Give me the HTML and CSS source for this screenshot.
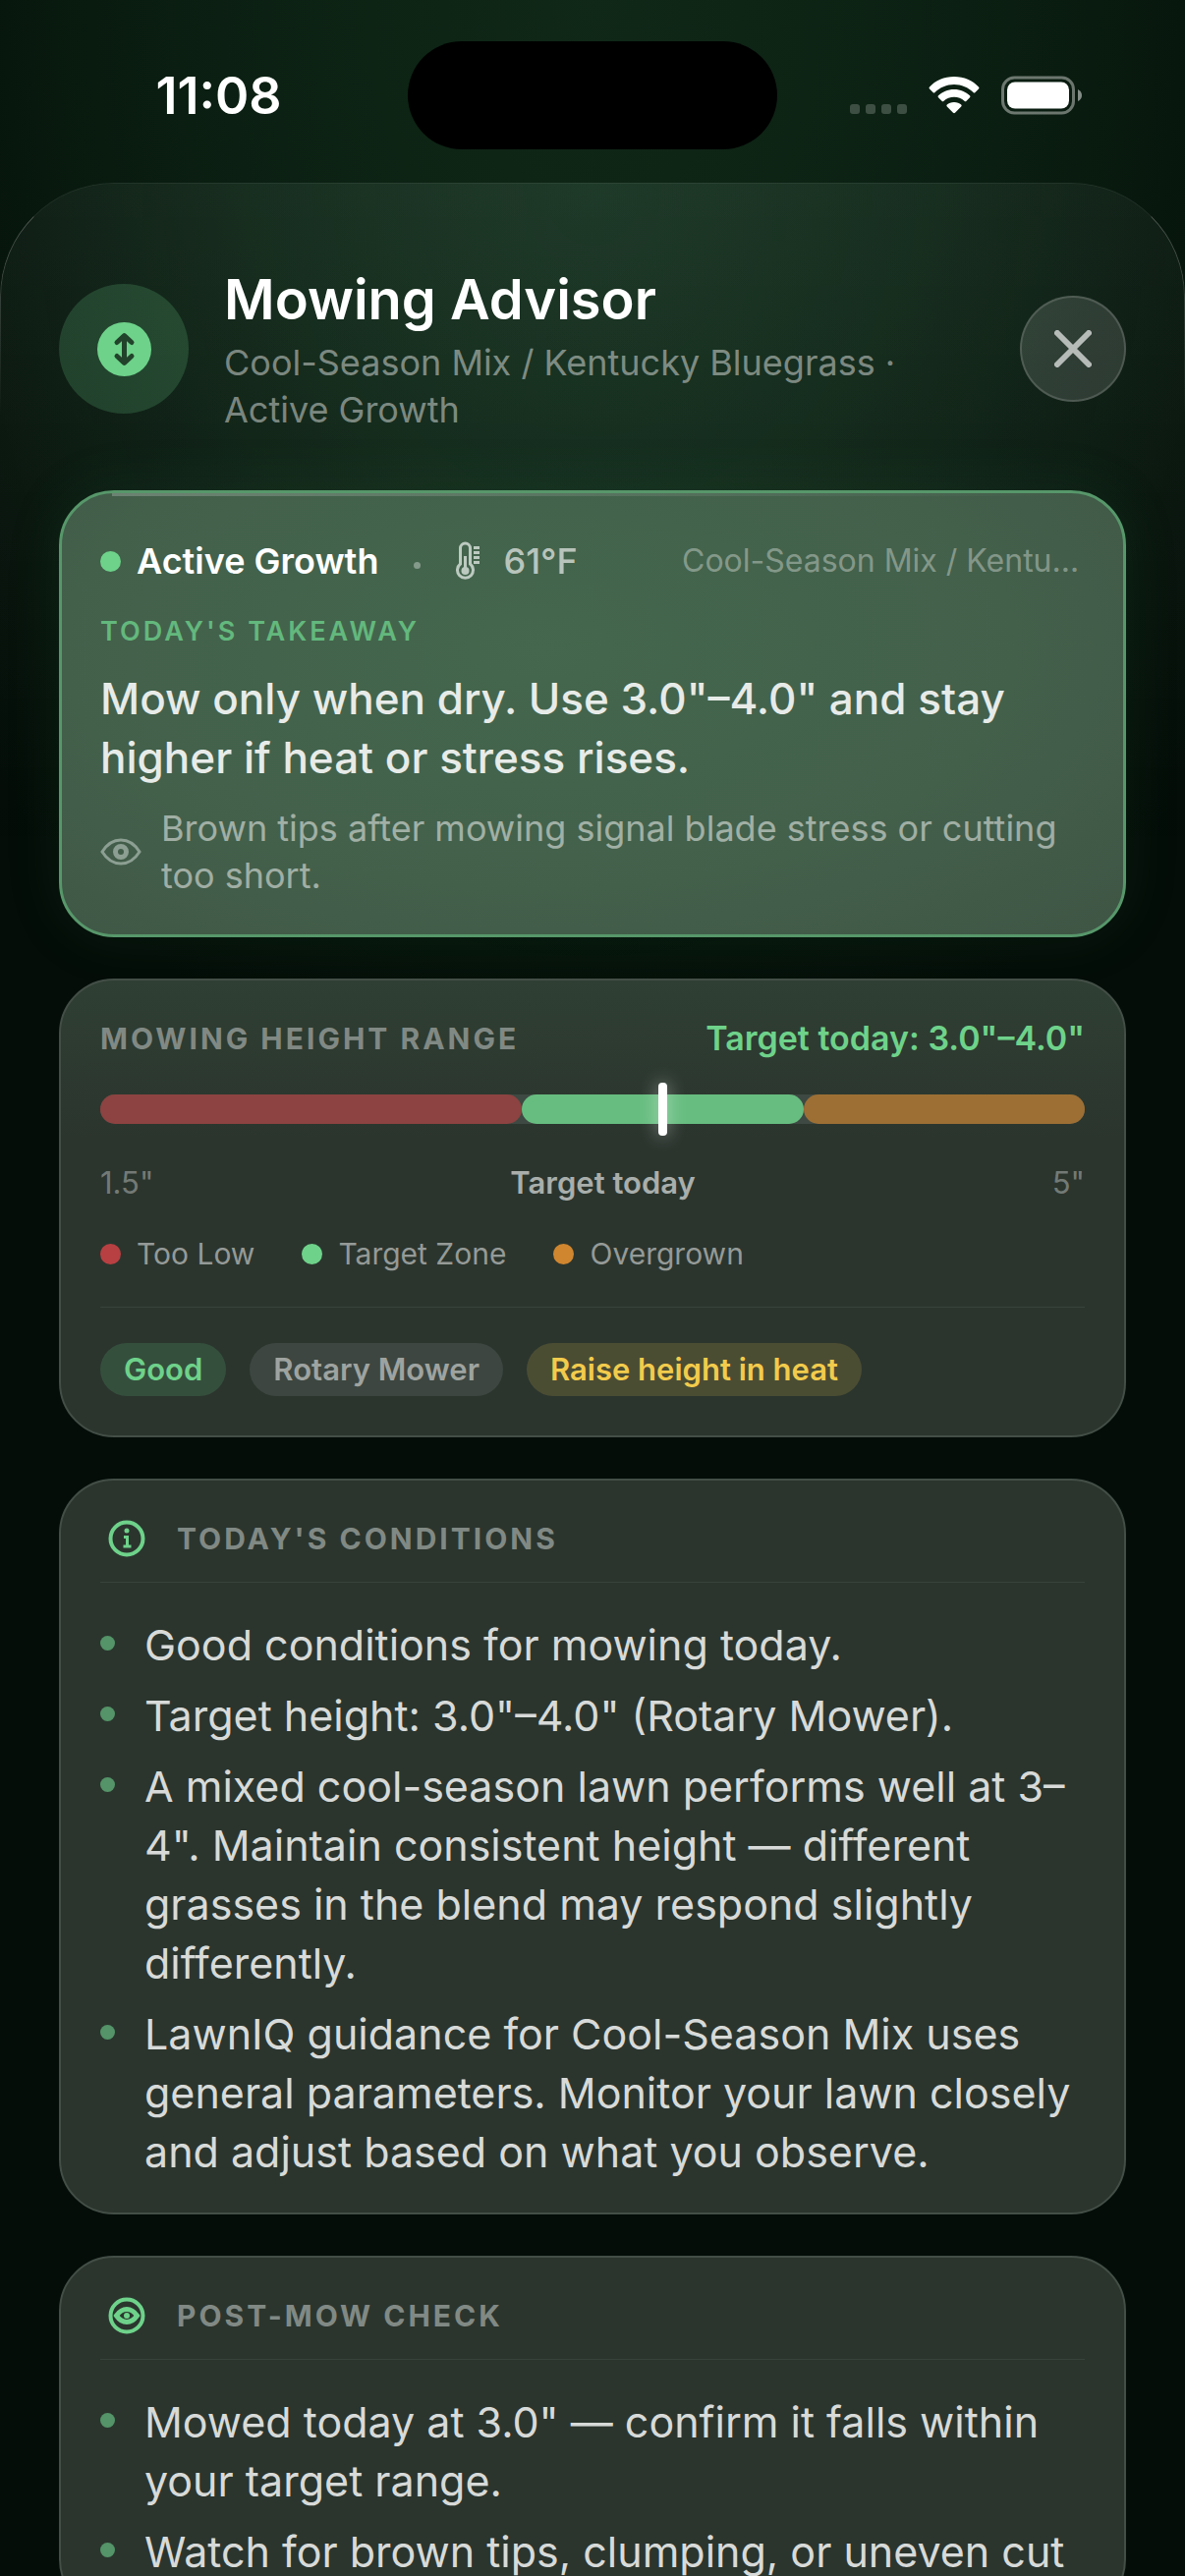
FILE: index.html
```html
<!DOCTYPE html>
<html lang="en">
<head>
    <meta charset="UTF-8">
    <meta name="viewport" content="width=device-width, initial-scale=1.0">
    <title>Mowing Advisor</title>
    <link rel="stylesheet" href="styles.css">
</head>
<body>
    <div class="screen">
        <!-- Status bar -->
        <div class="status-bar">
            <div class="status-time">11:08</div>
            <div class="island"></div>
            <div class="status-icons">
                <svg class="signal" viewBox="0 0 58 38" aria-hidden="true">
                    <rect x="0" y="28" width="10" height="10" rx="3"/>
                    <rect x="16" y="28" width="10" height="10" rx="3"/>
                    <rect x="32" y="28" width="10" height="10" rx="3"/>
                    <rect x="48" y="28" width="10" height="10" rx="3"/>
                </svg>
                <svg class="wifi" viewBox="0 0 52 38" aria-hidden="true">
                    <path d="M26 0C16 0 7 4 1 10.500Q0 11.500 1 12.500L4.500 16Q5.500 17 6.500 16C11.500 11 18.500 8 26 8S40.500 11 45.500 16Q46.500 17 47.500 16L51 12.500Q52 11.500 51 10.500C45 4 36 0 26 0Z"/>
                    <path d="M26 13C19.500 13 14 15.500 10 19.300Q9 20.300 10 21.300L13.500 24.800Q14.500 25.800 15.500 24.800C18.300 22.300 22 20.800 26 20.800S33.700 22.300 36.500 24.800Q37.500 25.800 38.500 24.800L42 21.300Q43 20.300 42 19.300C38 15.500 32.500 13 26 13Z"/>
                    <path d="M26 26C23 26 20.500 27 18.800 28.600Q17.800 29.500 18.800 30.500L25 36.800Q26 37.600 27 36.800L33.200 30.500Q34.200 29.500 33.200 28.600C31.500 27 29 26 26 26Z"/>
                </svg>
                <svg class="battery" viewBox="0 0 82 40" aria-hidden="true">
                    <rect class="battery-shell" x="1.500" y="2" width="72" height="36" rx="12"/>
                    <rect x="6" y="6.500" width="63" height="27" rx="8"/>
                    <path class="battery-tip" d="M78 14Q82 16 82 20T78 26Z"/>
                </svg>
            </div>
        </div>

        <main class="sheet">
            <header class="sheet-header">
                <div class="header-icon">
                    <svg viewBox="0 0 55 55" aria-hidden="true">
                        <circle cx="27.500" cy="27.500" r="27.500"/>
                        <path d="M27.500 14V41M20 20.500L27.500 13.500L35 20.500M20 34.500L27.500 41.500L35 34.500"/>
                    </svg>
                </div>
                <div class="header-text">
                    <h1>Mowing Advisor</h1>
                    <p>Cool-Season Mix / Kentucky Bluegrass · Active Growth</p>
                </div>
                <button class="close" type="button" aria-label="Close">
                    <svg viewBox="0 0 38 38" aria-hidden="true">
                        <path d="M3 3L35 35M35 3L3 35"/>
                    </svg>
                </button>
            </header>

            <!-- Takeaway -->
            <section class="card hero">
                <div class="hero-status">
                    <span class="dot green"></span>
                    <strong>Active Growth</strong>
                    <span class="separator"></span>
                    <svg class="thermometer" viewBox="0 0 24 40" aria-hidden="true">
                        <path d="M4.500 23V7A5 5 0 0 1 14.500 7V23A8 8 0 1 1 4.500 23Z"/>
                        <path d="M9.500 15V30M18 6.500H24M18 11.500H24M18 16.500H24M18 21.500H24"/>
                        <circle cx="9.500" cy="30" r="4"/>
                    </svg>
                    <span class="temperature">61°F</span>
                    <span class="grass">Cool-Season Mix / Kentucky Bluegrass</span>
                </div>
                <h2>TODAY'S TAKEAWAY</h2>
                <p class="takeaway">Mow only when dry. Use 3.0"–4.0" and stay higher if heat or stress rises.</p>
                <div class="note">
                    <svg viewBox="0 0 42 28" aria-hidden="true">
                        <path d="M2 14C7 6 13 2 21 2S35 6 40 14C35 22 29 26 21 26S7 22 2 14Z"/>
                        <circle cx="21" cy="14" r="5.500"/>
                    </svg>
                    <p>Brown tips after mowing signal blade stress or cutting too short.</p>
                </div>
            </section>

            <!-- Height range -->
            <section class="card range">
                <div class="range-header">
                    <h2>MOWING HEIGHT RANGE</h2>
                    <span class="target">Target today: 3.0"–4.0"</span>
                </div>
                <div class="range-scale">
                    <div class="bar">
                        <span class="too-low"></span>
                        <span class="zone"></span>
                        <span class="overgrown"></span>
                        <i class="marker" style="left: 57.14%"></i>
                    </div>
                    <div class="bar-labels">
                        <span>1.5"</span>
                        <b>Target today</b>
                        <span>5"</span>
                    </div>
                </div>
                <ul class="legend">
                    <li><span class="dot red"></span>Too Low</li>
                    <li><span class="dot green"></span>Target Zone</li>
                    <li><span class="dot orange"></span>Overgrown</li>
                </ul>
                <hr>
                <div class="chips">
                    <span class="chip good">Good</span>
                    <span class="chip">Rotary Mower</span>
                    <span class="chip warning">Raise height in heat</span>
                </div>
            </section>

            <!-- Conditions -->
            <section class="card list-card">
                <div class="list-header">
                    <svg viewBox="0 0 54 54" aria-hidden="true">
                        <circle cx="27" cy="27" r="16.500"/>
                        <path d="M24 25.500H27.500V34.500M23.500 35H31.500"/>
                        <circle class="fill" cx="27" cy="19" r="2.500"/>
                    </svg>
                    <h2>TODAY'S CONDITIONS</h2>
                </div>
                <ul class="bullets">
                    <li>Good conditions for mowing today.</li>
                    <li>Target height: 3.0"–4.0" (Rotary Mower).</li>
                    <li>A mixed cool-season lawn performs well at 3–4". Maintain consistent height — different grasses in the blend may respond slightly differently.</li>
                    <li>LawnIQ guidance for Cool-Season Mix uses general parameters. Monitor your lawn closely and adjust based on what you observe.</li>
                </ul>
            </section>

            <!-- Post-mow check -->
            <section class="card list-card">
                <div class="list-header">
                    <svg viewBox="0 0 54 54" aria-hidden="true">
                        <circle cx="27" cy="27" r="16.500"/>
                        <path class="eye" d="M16.500 27Q21 20.500 27 20.500T37.500 27Q33 33.500 27 33.500T16.500 27Z"/>
                        <circle class="fill" cx="27" cy="27" r="3"/>
                    </svg>
                    <h2>POST-MOW CHECK</h2>
                </div>
                <ul class="bullets">
                    <li>Mowed today at 3.0" — confirm it falls within your target range.</li>
                    <li>Watch for brown tips, clumping, or uneven cut</li>
                </ul>
            </section>
        </main>
    </div>
</body>
</html>
```
FILE: styles.css
```css
* {
    box-sizing: border-box;
}

body {
    margin: 0;
    background-color: #040d08;
    color: #fff;
    font-family: Inter, "Liberation Sans", sans-serif;
}

h1, h2, p, ul {
    margin: 0;
    padding: 0;
}

ul {
    list-style: none;
}

.screen {
    display: flex;
    flex-direction: column;
    height: 100vh;
    overflow: hidden;
    background: radial-gradient(ellipse 840px 1150px at 50% 0, #102818, #0b2012 45%, #040d08);
}

/* Status bar */
.status-bar {
    display: grid;
    grid-template-columns: 1fr 376px 1fr;
    align-items: center;
    flex: none;
    height: 186px;
    padding-bottom: 8px;
}

.status-time {
    margin-top: 18px;
    padding-left: 30px;
    text-align: center;
    font-size: 52px;
    font-weight: 600;
    line-height: 60px;
}

.island {
    height: 110px;
    margin-top: 16px;
    border-radius: 55px;
    background-color: #000;
}

.status-icons {
    display: flex;
    justify-content: center;
    align-items: center;
    gap: 22px;
    padding-right: 32px;
    margin-top: 16px;
    fill: #fff;
}

.signal {
    width: 58px;
    height: 38px;
    opacity: 0.2;
}

.wifi {
    width: 52px;
    height: 38px;
}

.battery {
    width: 82px;
    height: 40px;
}

.battery-shell {
    fill: none;
    stroke: #fff;
    stroke-width: 3;
    opacity: 0.4;
}

.battery-tip {
    opacity: 0.5;
}

/* Sheet */
.sheet {
    position: relative;
    display: flex;
    flex-direction: column;
    gap: 42px;
    flex: none;
    padding: 83px 60px 42px;
    border-radius: 116px 116px 0 0;
    background: radial-gradient(ellipse 640px 800px at 50% 0, rgba(88, 150, 118, 0.12), transparent),
                linear-gradient(rgba(255, 255, 255, 0.04), transparent 700px);
}

/* Thin edge that fades down both sides of the sheet */
.sheet::before {
    content: "";
    position: absolute;
    inset: 0 0 auto;
    height: 240px;
    border: 1px solid rgba(255, 255, 255, 0.3);
    border-top-color: rgba(255, 255, 255, 0.06);
    border-bottom: none;
    border-radius: 116px 116px 0 0;
    mask-image: linear-gradient(#000, transparent);
    pointer-events: none;
}

.sheet-header {
    display: flex;
    align-items: center;
    gap: 36px;
    margin-bottom: 16px;
}

.header-icon {
    display: flex;
    justify-content: center;
    align-items: center;
    flex: none;
    width: 132px;
    height: 132px;
    border-radius: 50%;
    background-color: rgba(110, 210, 138, 0.2);
}

.header-icon svg {
    width: 55px;
    height: 55px;
    fill: #6ed28a;
}

.header-icon path {
    fill: none;
    stroke: #22432b;
    stroke-width: 5;
    stroke-linecap: round;
    stroke-linejoin: round;
}

.header-text {
    flex: 1;
}

h1 {
    margin-bottom: 4px;
    font-size: 56px;
    font-weight: 600;
    line-height: 72px;
}

.header-text p {
    color: rgba(255, 255, 255, 0.45);
    font-size: 36px;
    line-height: 48px;
}

.close {
    display: flex;
    justify-content: center;
    align-items: center;
    flex: none;
    width: 108px;
    height: 108px;
    padding: 0;
    border: 2px solid rgba(255, 255, 255, 0.15);
    border-radius: 50%;
    background-color: rgba(255, 255, 255, 0.13);
}

.close svg {
    width: 38px;
    height: 38px;
    fill: none;
    stroke: rgba(255, 255, 255, 0.65);
    stroke-width: 6;
    stroke-linecap: round;
}

/* Cards */
.card {
    position: relative;
    padding: 32px 40px;
    border: 2px solid #434e47;
    border-radius: 56px;
    background-color: #2b352e;
}

h2 {
    color: #818984;
    font-size: 30px;
    font-weight: 700;
    line-height: 42px;
    letter-spacing: 3px;
}

.dot {
    flex: none;
    width: 21px;
    height: 21px;
    border-radius: 50%;
}

.green {
    background-color: #6ed28a;
}

.red {
    background-color: #b84042;
}

.orange {
    background-color: #d0862f;
}

/* Takeaway card */
.hero {
    padding: 45px 39px 36px;
    border: 3px solid #57976a;
    background: radial-gradient(ellipse 90% 110% at 45% 35%, #44674d, #43604b 50%, #3d5042);
    box-shadow: 0 0 60px rgba(60, 150, 85, 0.1);
}

/* Highlight under the top border */
.hero::before {
    content: "";
    position: absolute;
    top: 0;
    left: 51px;
    right: 51px;
    height: 3px;
    background: linear-gradient(to right, rgba(255, 255, 255, 0.22), transparent);
}

.hero-status {
    display: flex;
    align-items: center;
    gap: 16px;
    font-size: 36px;
    line-height: 48px;
}

.hero-status strong {
    font-weight: 600;
}

.separator {
    flex: none;
    width: 7px;
    height: 7px;
    margin: 8px 20px 0;
    border-radius: 50%;
    background-color: rgba(255, 255, 255, 0.35);
}

.thermometer {
    flex: none;
    width: 24px;
    height: 40px;
    fill: #bccac0;
}

.thermometer path {
    fill: none;
    stroke: #bccac0;
    stroke-width: 3;
}

.temperature {
    margin-left: 8px;
    color: rgba(255, 255, 255, 0.65);
    font-weight: 500;
}

.grass {
    width: 410px;
    margin-left: auto;
    overflow: hidden;
    white-space: nowrap;
    text-overflow: ellipsis;
    color: rgba(255, 255, 255, 0.36);
    font-size: 32px;
}

.hero h2 {
    margin: 30px 0 20px;
    color: #63b87d;
    font-size: 27px;
    font-weight: 600;
    line-height: 36px;
}

.takeaway {
    color: #e7ebe8;
    font-size: 44px;
    font-weight: 500;
    line-height: 60px;
}

.note {
    display: flex;
    align-items: center;
    gap: 20px;
    margin-top: 18px;
    color: rgba(255, 255, 255, 0.5);
    font-size: 36px;
    line-height: 48px;
}

.note svg {
    flex: none;
    width: 42px;
    height: 28px;
    fill: none;
    stroke: #8c9f92;
    stroke-width: 3;
}

.note circle {
    stroke-width: 5;
}

/* Height range card */
.range {
    display: flex;
    flex-direction: column;
    gap: 36px;
    padding: 38px 40px 40px;
    background-image: linear-gradient(#2f3f33, #2b352e 160px);
}

.range-header {
    display: flex;
    justify-content: space-between;
    align-items: center;
}

.target {
    color: #6ed28a;
    font-size: 34px;
    font-weight: 600;
    line-height: 42px;
}

.bar {
    position: relative;
    display: flex;
    height: 30px;
    border-radius: 15px;
    background-color: #3e4943;
}

.bar span {
    flex: 2;
    border-radius: 15px;
}

.bar .too-low {
    flex: 3;
    background-color: #8c4341;
}

.bar .zone {
    background-color: #67bd80;
}

.bar .overgrown {
    background-color: #9d6f35;
}

.marker {
    position: absolute;
    top: -12px;
    width: 9px;
    height: 54px;
    margin-left: -5px;
    border-radius: 4px;
    background-color: #fff;
    box-shadow: 0 0 18px rgba(255, 255, 255, 0.5);
}

.bar-labels {
    display: flex;
    justify-content: space-between;
    margin-top: 42px;
    color: rgba(255, 255, 255, 0.36);
    font-size: 31px;
    line-height: 36px;
}

.bar-labels b {
    color: #a9aeab;
    font-weight: 600;
}

.legend {
    display: flex;
    gap: 48px;
    color: #959a97;
    font-size: 30px;
    line-height: 36px;
}

.legend li {
    display: flex;
    align-items: center;
    gap: 16px;
}

hr {
    width: 100%;
    height: 1px;
    margin: 0;
    border: none;
    background-color: #38433c;
}

.chips {
    display: flex;
    gap: 24px;
}

.chip {
    padding: 0 24px;
    border-radius: 27px;
    background-color: #3d4640;
    color: #9ea3a0;
    font-size: 31px;
    font-weight: 600;
    line-height: 54px;
}

.good {
    background-color: #354f3d;
    color: #6ed28a;
}

.warning {
    background-color: #4b4d33;
    color: #f2cb4c;
}

/* List cards */
.list-header {
    display: flex;
    align-items: center;
    gap: 24px;
    padding-bottom: 17px;
    border-bottom: 1px solid #38433c;
}

.list-header svg {
    width: 54px;
    height: 54px;
    fill: none;
    stroke: #6ed28a;
    stroke-width: 4;
}

.list-header path {
    stroke-width: 3;
}

.list-header .eye {
    stroke-width: 5;
}

.list-header .fill {
    fill: #6ed28a;
    stroke: none;
}

.bullets {
    display: flex;
    flex-direction: column;
    gap: 12px;
    margin-top: 33px;
    color: #d7dad8;
    font-size: 43px;
    line-height: 60px;
}

.bullets li {
    display: flex;
    gap: 30px;
}

.bullets li::before {
    content: "";
    flex: none;
    width: 15px;
    height: 15px;
    margin-top: 21px;
    border-radius: 50%;
    background-color: #549468;
}
```
